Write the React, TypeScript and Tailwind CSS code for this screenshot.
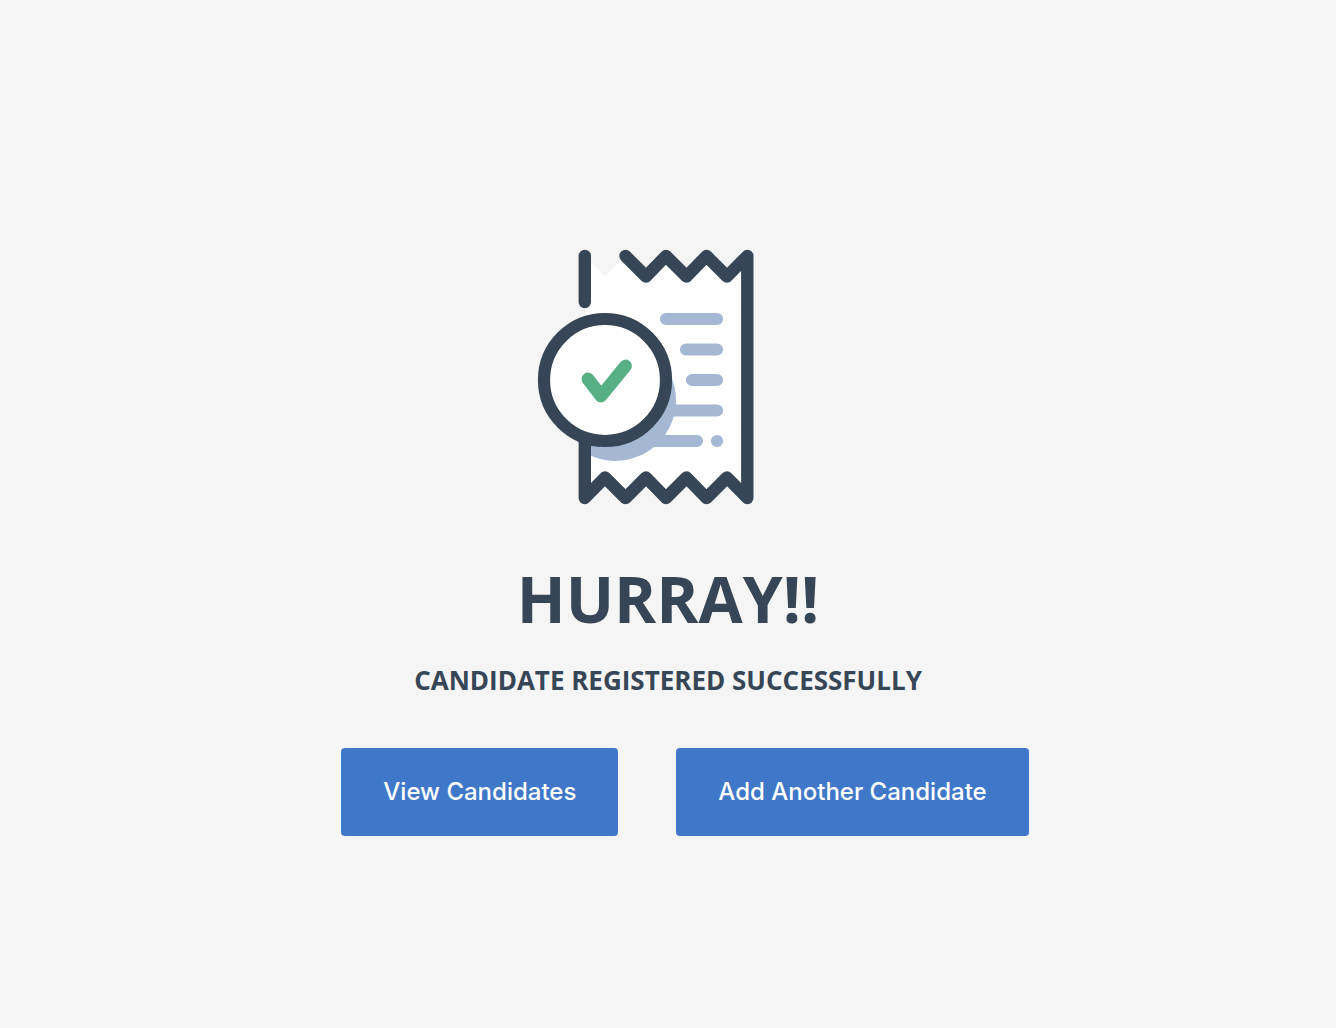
function ReceiptIcon() {
  return (
    <svg className="overflow-visible" width="260" height="254" viewBox="538 250 260 254" fill="none" strokeLinecap="round" strokeLinejoin="round" aria-hidden="true">
      <path d="M584.800 256L605 276.500L625.500 256L646 276.500L666 256L686.500 276.500L706.500 256L727 276.500L747.500 256V498L727 477.500L706.500 498L686.500 477.500L666 498L646 477.500L625.500 498L605 477.500L584.800 498Z" fill="#fff" />
      <path d="M666 319H717M686 349.500H717M692 380H717M660 410.500H717M640 441H697" stroke="#a4b7d3" strokeWidth="12.200" />
      <circle cx="717" cy="441" r="6.100" fill="#a4b7d3" />
      <path d="M585 453Q601 461 615 461A61 61 0 0 0 676 400Q676 388 671 376L600 430H585Z" fill="#a4b7d3" />
      <path d="M584.800 256V302M625.500 256L646 276.500L666 256L686.500 276.500L706.500 256L727 276.500L747.300 256V498L727 477.500L706.500 498L686.500 477.500L666 498L646 477.500L625.500 498L605 477.500L584.800 498V436" stroke="#364656" strokeWidth="12.400" />
      <circle cx="605" cy="380" r="61" fill="#fff" stroke="#364656" strokeWidth="12.200" />
      <path d="M588 379L601 396L625.500 366" stroke="#56b084" strokeWidth="12.800" />
    </svg>
  );
}

export default function App() {
  return (
    <main className="flex min-h-screen flex-col items-center bg-[#f5f5f5] px-4 pt-[250px] pb-16 text-center font-['Open_Sans',sans-serif] font-bold text-[#364656]">
      <ReceiptIcon />
      <h1 className="mt-[55px] text-[64px] leading-[80px]">HURRAY!!</h1>
      <h2 className="mt-[23px] text-[26px] leading-9">CANDIDATE REGISTERED SUCCESSFULLY</h2>
      <div className="mt-[50px] ml-[34px] flex flex-wrap justify-center gap-[58px] font-['Inter',sans-serif] text-2xl font-medium text-white">
        <button type="button" className="h-[88px] rounded bg-[#3f78c9] px-[42px]">View Candidates</button>
        <button type="button" className="h-[88px] rounded bg-[#3f78c9] px-[42px]">Add Another Candidate</button>
      </div>
    </main>
  );
}
